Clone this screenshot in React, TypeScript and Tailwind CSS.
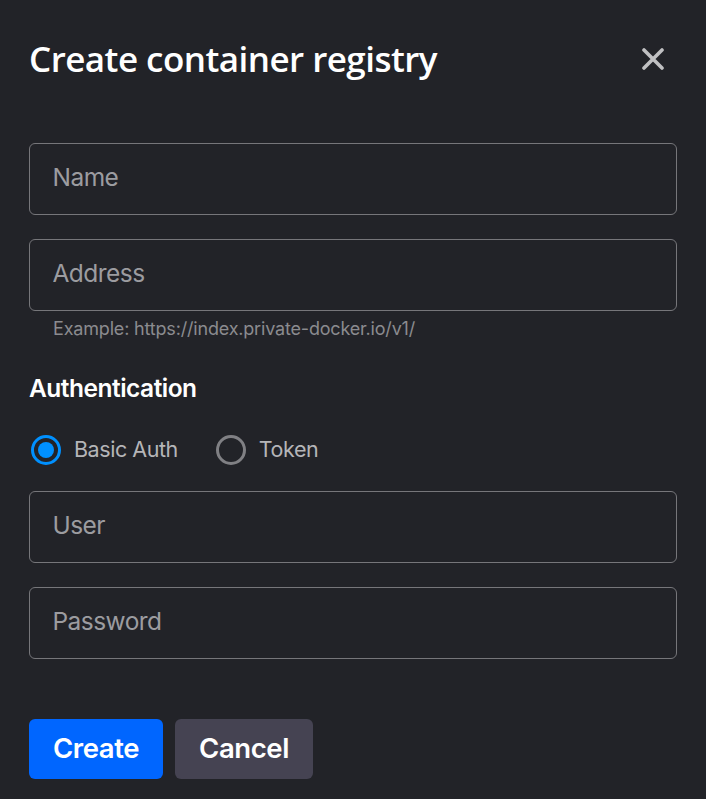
import { useState } from "react";

function Field({ label, type = "text" }: { label: string; type?: string }) {
  return (
    <input
      type={type}
      placeholder={label}
      className="block h-[72px] w-full rounded-[6px] border border-[#76767a] bg-transparent pr-[23px] pb-1 pl-[22.5px] text-[24.5px] tracking-[-0.54px] text-white outline-none placeholder:text-[#9c9ca0]"
    />
  );
}

function Radio({ label, checked, onSelect }: { label: string; checked: boolean; onSelect: () => void }) {
  return (
    <button type="button" role="radio" aria-checked={checked} onClick={onSelect} className="flex items-center gap-[13px]">
      <span
        className={
          checked
            ? "flex size-[30px] items-center justify-center rounded-full border-[3px] border-[#0090ff]"
            : "flex size-[30px] items-center justify-center rounded-full border-[3px] border-[#808084]"
        }
      >
        {checked && <span className="size-4 rounded-full bg-[#0090ff]" />}
      </span>
      <span className="pb-px text-[21.5px] leading-[29px] tracking-[-0.45px] text-[#b5b5b8]">{label}</span>
    </button>
  );
}

export default function App() {
  const [auth, setAuth] = useState("basic");

  return (
    <div className="flex h-[799px] w-[706px] flex-col bg-[#222328] px-[29px] pt-[35px] font-[Inter,sans-serif]">
      {/* Header */}
      <div className="flex h-12 items-center justify-between pr-[13px]">
        <h1 className="font-['Open_Sans',sans-serif] text-[35px] font-semibold tracking-[-0.54px] whitespace-nowrap text-white">
          Create container registry
        </h1>
        <button type="button" aria-label="Close">
          <svg viewBox="0 0 22 22" className="size-[22px]" fill="none" stroke="#c0c0c2" strokeWidth="3.6" strokeLinecap="round">
            <path d="M2 2 20 20M20 2 2 20" />
          </svg>
        </button>
      </div>

      <form className="mt-[60px] flex flex-col" onSubmit={(e) => e.preventDefault()}>
        <div className="flex flex-col gap-6">
          <Field label="Name" />
          <Field label="Address" />
        </div>
        <p className="mt-[6px] pl-6 text-[18px] leading-6 tracking-[-0.18px] text-[#8b8b8f]">
          Example: https://index.private-docker.io/v1/
        </p>

        {/* Authentication */}
        <h2 className="mt-[31px] text-[24.5px] leading-8 font-semibold tracking-[-0.5px] text-white">Authentication</h2>
        <div role="radiogroup" className="mt-[31px] flex gap-[38px] pl-[2px]">
          <Radio label="Basic Auth" checked={auth === "basic"} onSelect={() => setAuth("basic")} />
          <Radio label="Token" checked={auth === "token"} onSelect={() => setAuth("token")} />
        </div>
        <div className="mt-[26px] flex flex-col gap-6">
          <Field label="User" />
          <Field label="Password" type="password" />
        </div>

        {/* Actions */}
        <div className="mt-[60px] flex gap-3">
          <button type="submit" className="h-[60px] w-[134px] rounded-[6px] bg-[#0066ff] text-[27.5px] font-semibold tracking-[-0.4px] text-white">
            Create
          </button>
          <button type="button" className="h-[60px] w-[138px] rounded-[6px] bg-[#454352] text-[27.5px] font-semibold tracking-[-0.4px] text-white">
            Cancel
          </button>
        </div>
      </form>
    </div>
  );
}
